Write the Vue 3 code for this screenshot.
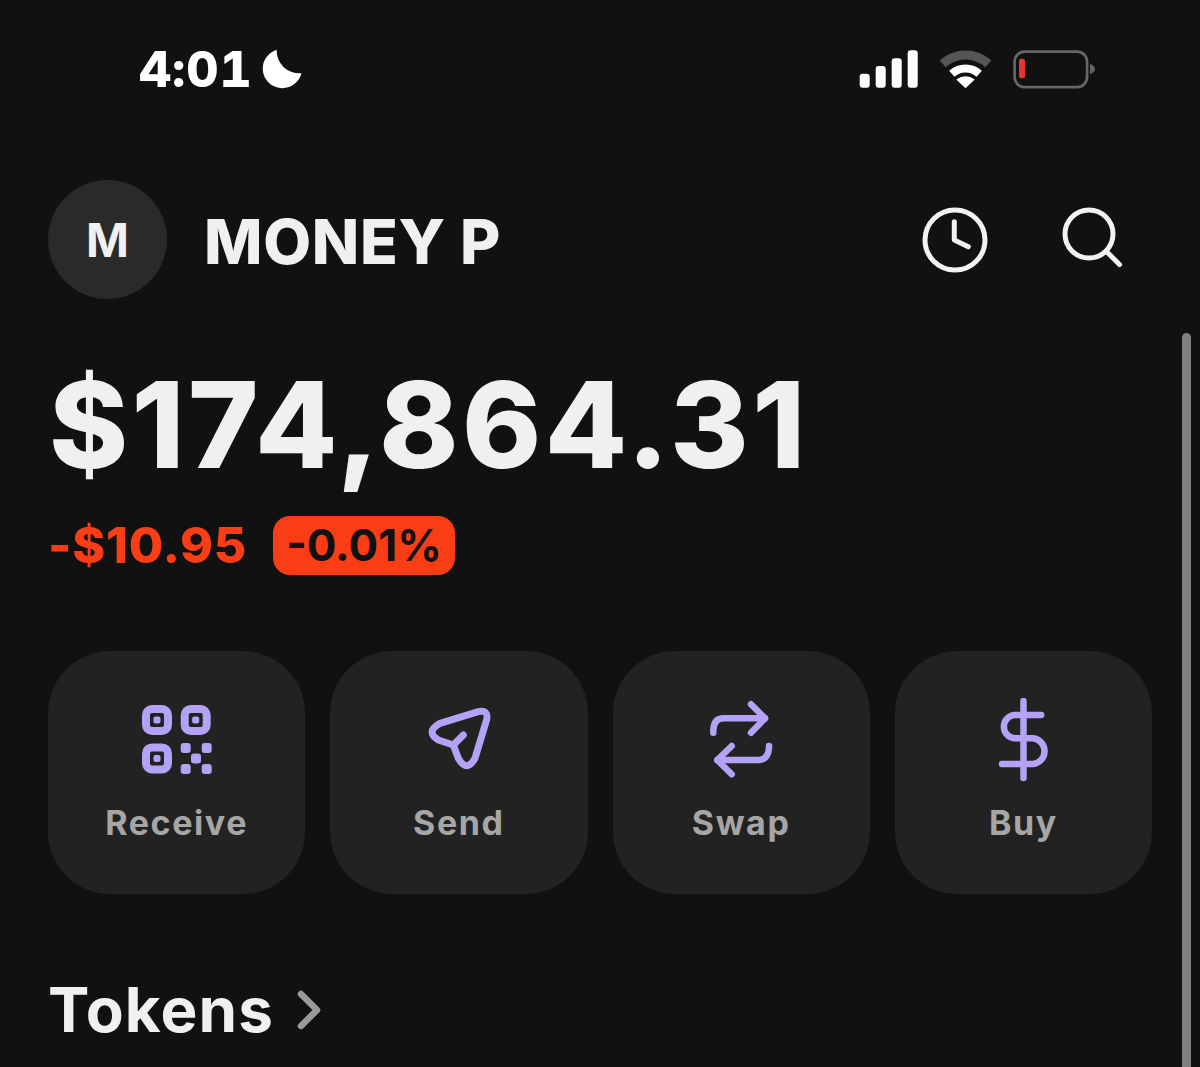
<script setup>
</script>

<template>
  <div class="page">
    <div class="status">
      <div class="time">
        <span>4:01</span>
        <svg class="moon" width="40" height="40" viewBox="262 48.5 40 40">
          <path d="M276.7 49.3A19.6 19.6 0 1 0 301.4 72.7A22.5 22.5 0 0 1 276.7 49.3Z" fill="#fff" />
        </svg>
      </div>
      <div class="indicators">
        <svg width="60" height="40" viewBox="860 48 60 40" fill="#fff">
          <rect x="860.7" y="72.7" width="10" height="14" rx="3" />
          <rect x="876.7" y="65" width="10" height="21.7" rx="3" />
          <rect x="892.7" y="57.3" width="10" height="29.4" rx="3" />
          <rect x="908.7" y="49.3" width="10" height="37.4" rx="3" />
        </svg>
        <svg width="52" height="40" viewBox="939.5 48 52 40" fill="none">
          <path d="M942.2 62.8A34 34 0 0 1 987.8 62.8" stroke="#555" stroke-width="9" />
          <path d="M951.3 72.8A20.5 20.5 0 0 1 978.7 72.8" stroke="#fff" stroke-width="8" />
          <path d="M965 87.2L955.8 78.6Q965 72 974.2 78.6Z" fill="#fff" />
        </svg>
        <svg width="83" height="40" viewBox="1013 48 83 40">
          <rect x="1014.6" y="50.6" width="72.5" height="35.5" rx="10" fill="none" stroke="#666" stroke-width="2.7" />
          <rect x="1019" y="57.7" width="6" height="19.6" rx="2" fill="#e8342f" />
          <path d="M1090 62.7Q1095 65 1095 68T1090 73.3Z" fill="#666" />
        </svg>
      </div>
    </div>

    <header class="account">
      <div class="avatar">M</div>
      <div class="name">MONEY P</div>
      <div class="tools">
        <svg width="70" height="70" viewBox="0 0 70 70" fill="none" stroke="#f2f2f2" stroke-width="5" stroke-linecap="round" stroke-linejoin="round">
          <circle cx="35" cy="35" r="30" />
          <path d="M34.3 16.7V35L48.3 41.7" />
        </svg>
        <svg width="66" height="66" viewBox="0 0 66 66" fill="none" stroke="#f2f2f2" stroke-width="5" stroke-linecap="round">
          <circle cx="27" cy="27" r="24" />
          <path d="M45.5 45.5L57.5 57.5" />
        </svg>
      </div>
    </header>

    <div class="balance">$174,864.31</div>
    <div class="change">
      <span class="amount">-$10.95</span>
      <span class="percent">-0.01%</span>
    </div>

    <div class="actions">
      <button class="action">
        <svg class="icon" viewBox="0 0 84 84" fill="#b3a2f5">
          <g fill="none" stroke="#b3a2f5" stroke-width="8">
            <rect x="11" y="11" width="22" height="22" rx="6" />
            <rect x="49.7" y="11" width="22" height="22" rx="6" />
            <rect x="11" y="49.4" width="22" height="22" rx="6" />
          </g>
          <rect x="18.5" y="18.5" width="7" height="7" rx="2" />
          <rect x="57.2" y="18.5" width="7" height="7" rx="2" />
          <rect x="18.5" y="57" width="7" height="7" rx="2" />
          <rect x="45.7" y="45" width="10" height="10" rx="3" />
          <rect x="66.7" y="45" width="10" height="10" rx="3" />
          <rect x="56" y="55.4" width="10" height="10" rx="3" />
          <rect x="45.7" y="66" width="10" height="10" rx="3" />
          <rect x="66.7" y="66" width="10" height="10" rx="3" />
        </svg>
        <span>Receive</span>
      </button>
      <button class="action">
        <svg class="icon" viewBox="0 0 84 84" fill="none" stroke="#b3a2f5" stroke-width="7" stroke-linecap="round" stroke-linejoin="round">
          <path d="M23 25.3L61.3 13.7Q71.5 11.5 69.7 21.5L58 60.3Q49.7 75 41.3 60.3L36.3 47L21.3 42Q8 34 23 25.3Z" />
          <path d="M36.3 47L46.3 37" />
        </svg>
        <span>Send</span>
      </button>
      <button class="action">
        <svg class="icon" viewBox="0 0 84 84" fill="none" stroke="#b3a2f5" stroke-width="6.5" stroke-linecap="round" stroke-linejoin="round">
          <path d="M14.3 34.7V32Q15 20.3 24.3 20.3H66" />
          <path d="M52 6.3L66 20.3L52 34.7" />
          <path d="M70 48V50Q69 62 59.3 62H18.3" />
          <path d="M32.7 48L18.3 62L32.7 76.3" />
        </svg>
        <span>Swap</span>
      </button>
      <button class="action">
        <svg class="icon" viewBox="0 0 84 84" fill="none" stroke="#b3a2f5" stroke-width="6.5" stroke-linecap="round">
          <path d="M42.5 3V80" />
          <path d="M60.2 17H33.5A11.7 11.7 0 0 0 33.5 40.3H51.8A12.9 12.9 0 0 1 51.8 66H21" />
        </svg>
        <span>Buy</span>
      </button>
    </div>

    <div class="section">
      <span>Tokens</span>
      <svg width="26" height="42" viewBox="0 0 26 42" fill="none" stroke="#9a9a9a" stroke-width="6.5" stroke-linecap="round" stroke-linejoin="round">
        <path d="M5 5L21 21L5 37" />
      </svg>
    </div>

    <div class="scrollbar"></div>
  </div>
</template>

<style scoped>
.page {
  position: relative;
  box-sizing: border-box;
  width: 1200px;
  height: 1067px;
  overflow: hidden;
  background: #111112;
  color: #f0f0f0;
  font-family: Inter, "Liberation Sans", sans-serif;
  padding: 48px 48px 0;
}

.status {
  display: flex;
  justify-content: space-between;
  align-items: center;
  height: 41px;
  padding: 0 56px 0 91px;
}

.time {
  display: flex;
  align-items: center;
  gap: 10px;
  font-size: 50px;
  font-weight: 800;
  color: #fff;
  letter-spacing: 0.8px;
  font-variant-numeric: tabular-nums;
}

.moon {
  display: block;
}

.indicators {
  display: flex;
  align-items: center;
  gap: 21px;
}

.account {
  display: flex;
  align-items: center;
  margin-top: 91px;
}

.avatar {
  display: flex;
  align-items: center;
  justify-content: center;
  width: 119px;
  height: 119px;
  border-radius: 50%;
  background: #2a2a2a;
  font-size: 46px;
  font-weight: 700;
}

.name {
  margin-left: 37px;
  padding-top: 3px;
  font-size: 62px;
  font-weight: 800;
  letter-spacing: 0.7px;
}

.tools {
  display: flex;
  align-items: center;
  gap: 72px;
  margin-left: auto;
  margin-right: 24px;
}

.balance {
  margin-top: 61px;
  margin-left: 1px;
  font-size: 120px;
  line-height: 130px;
  font-weight: 800;
  letter-spacing: 3.4px;
}

.change {
  display: flex;
  align-items: center;
  gap: 26px;
  margin-top: 25px;
}

.amount {
  font-size: 50px;
  font-weight: 800;
  letter-spacing: 0.7px;
  color: #f93d14;
}

.percent {
  padding: 0 13px;
  height: 59px;
  line-height: 59px;
  border-radius: 17px;
  background: #f93d14;
  color: #111112;
  font-size: 44px;
  font-weight: 700;
}

.actions {
  display: grid;
  grid-template-columns: repeat(4, 1fr);
  gap: 25px;
  margin-top: 76px;
}

.action {
  display: flex;
  flex-direction: column;
  align-items: center;
  height: 243px;
  padding: 47px 0 0;
  border: 0;
  border-radius: 62px;
  background: #222223;
  color: #a6a6a6;
  font-family: inherit;
  font-size: 34px;
  font-weight: 700;
  letter-spacing: 1.6px;
}

.icon {
  display: block;
  width: 84px;
  height: 84px;
  margin-bottom: 20px;
}

.section {
  display: flex;
  align-items: center;
  gap: 22px;
  margin-top: 78px;
  font-size: 62px;
  font-weight: 700;
  letter-spacing: 1.1px;
}

.scrollbar {
  position: absolute;
  top: 333px;
  right: 9px;
  bottom: 0;
  width: 9px;
  border-radius: 5px 5px 0 0;
  background: #808080;
}
</style>
